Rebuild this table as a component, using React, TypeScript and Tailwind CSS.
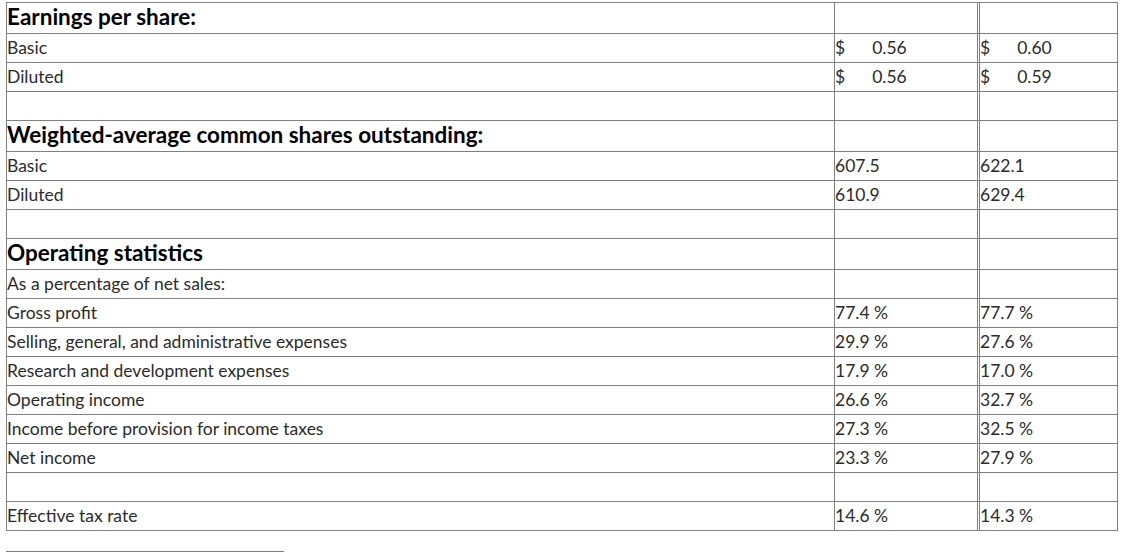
import React from 'react';

type Row =
  | { kind: 'head'; label: string }
  | { kind: 'empty' }
  | { kind: 'text'; label: string }
  | { kind: 'money'; label: string; a: string; b: string }
  | { kind: 'value'; label: string; a: string; b: string };

const rows: Row[] = [
  { kind: 'head', label: 'Earnings per share:' },
  { kind: 'money', label: 'Basic', a: '0.56', b: '0.60' },
  { kind: 'money', label: 'Diluted', a: '0.56', b: '0.59' },
  { kind: 'empty' },
  { kind: 'head', label: 'Weighted-average common shares outstanding:' },
  { kind: 'value', label: 'Basic', a: '607.5', b: '622.1' },
  { kind: 'value', label: 'Diluted', a: '610.9', b: '629.4' },
  { kind: 'empty' },
  { kind: 'head', label: 'Operating statistics' },
  { kind: 'text', label: 'As a percentage of net sales:' },
  { kind: 'value', label: 'Gross profit', a: '77.4 %', b: '77.7 %' },
  { kind: 'value', label: 'Selling, general, and administrative expenses', a: '29.9 %', b: '27.6 %' },
  { kind: 'value', label: 'Research and development expenses', a: '17.9 %', b: '17.0 %' },
  { kind: 'value', label: 'Operating income', a: '26.6 %', b: '32.7 %' },
  { kind: 'value', label: 'Income before provision for income taxes', a: '27.3 %', b: '32.5 %' },
  { kind: 'value', label: 'Net income', a: '23.3 %', b: '27.9 %' },
  { kind: 'empty' },
  { kind: 'value', label: 'Effective tax rate', a: '14.6 %', b: '14.3 %' },
];

const Money: React.FC<{ v: string }> = ({ v }) => (
  <span className="flex">
    <span>$</span>
    <span className="ml-[27px]">{v}</span>
  </span>
);

export default function App() {
  const cell = 'border-b border-[#808080] p-0 align-middle';
  return (
    <div
      className="bg-white min-h-[555px] pt-[2px] pl-[6px] text-[#2b2b2b]"
      style={{ fontFamily: 'Lato, "Open Sans", sans-serif' }}
    >
      <table className="border-separate border-spacing-0 w-[1112px] text-[17.5px] leading-[28px]">
        <tbody>
          {rows.map((r, i) => {
            const top = i === 0 ? ' border-t' : '';
            const h = r.kind === 'head' ? 'h-[31px]' : 'h-[29px]';
            let label: React.ReactNode = null;
            let a: React.ReactNode = null;
            let b: React.ReactNode = null;
            if (r.kind === 'head') {
              label = <span className="text-[22.5px] font-bold text-black">{r.label}</span>;
            } else if (r.kind === 'text') {
              label = r.label;
            } else if (r.kind === 'money') {
              label = r.label;
              a = <Money v={r.a} />;
              b = <Money v={r.b} />;
            } else if (r.kind === 'value') {
              label = r.label;
              a = r.a;
              b = r.b;
            }
            return (
              <tr key={i} className={h}>
                <td className={`${cell}${top} border-l border-r w-[829px]`}>{label}</td>
                <td className={`${cell}${top} border-r-[3px] border-r-[#808080] border-double w-[145px]`}>{a}</td>
                <td className={`${cell}${top} border-r`}>{b}</td>
              </tr>
            );
          })}
        </tbody>
      </table>
      <div className="mt-[20px] w-[278px] border-t border-[#808080]" />
    </div>
  );
}
